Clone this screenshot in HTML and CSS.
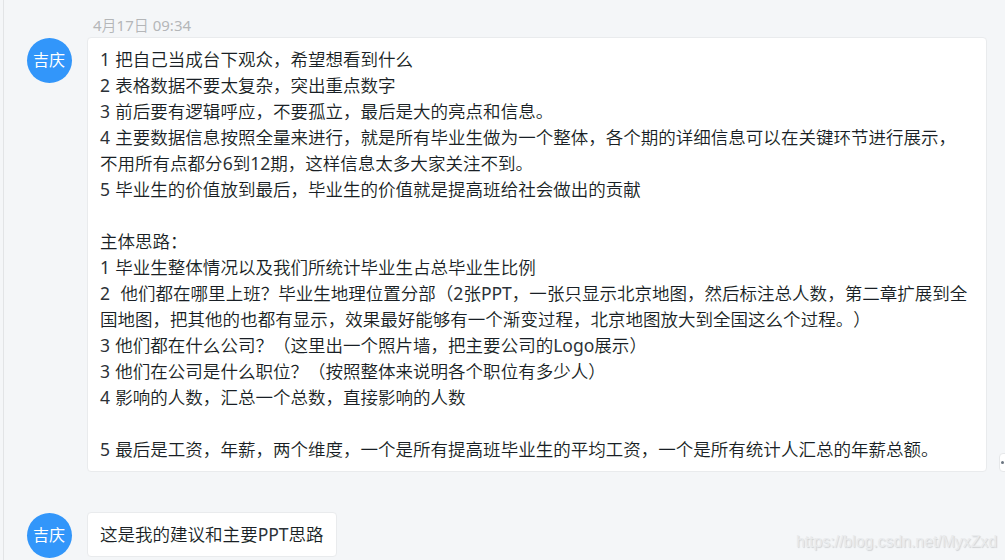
FILE: index.html
```html
<!DOCTYPE html>
<html lang="zh-CN">
<head>
    <meta charset="UTF-8">
    <meta name="viewport" content="width=device-width, initial-scale=1.0">
    <title>聊天记录</title>
    <link rel="stylesheet" href="styles.css">
</head>
<body>
    <div class="chat">
        <div class="time"><span class="en">4</span>月<span class="en">17</span>日<span class="en"> 09:34</span></div>
        <div class="message">
            <div class="avatar">吉庆</div>
            <div class="bubble bubble-long">
                <p><span class="en">1 </span>把自己当成台下观众，希望想看到什么</p>
                <p><span class="en">2 </span>表格数据不要太复杂，突出重点数字</p>
                <p><span class="en">3 </span>前后要有逻辑呼应，不要孤立，最后是大的亮点和信息。</p>
                <p><span class="en">4 </span>主要数据信息按照全量来进行，就是所有毕业生做为一个整体，各个期的详细信息可以在关键环节进行展示，<br>不用所有点都分<span class="en">6</span>到<span class="en">12</span>期，这样信息太多大家关注不到。</p>
                <p><span class="en">5 </span>毕业生的价值放到最后，毕业生的价值就是提高班给社会做出的贡献</p>
                <p><br></p>
                <p>主体思路：</p>
                <p><span class="en">1 </span>毕业生整体情况以及我们所统计毕业生占总毕业生比例</p>
                <p><span class="en">2&nbsp; </span>他们都在哪里上班？毕业生地理位置分部（<span class="en">2</span>张<span class="en">PPT</span>，一张只显示北京地图，然后标注总人数，第二章扩展到全<br>国地图，把其他的也都有显示，效果最好能够有一个渐变过程，北京地图放大到全国这么个过程。）</p>
                <p><span class="en">3 </span>他们都在什么公司？（这里出一个照片墙，把主要公司的<span class="en">Logo</span>展示）</p>
                <p><span class="en">3 </span>他们在公司是什么职位？（按照整体来说明各个职位有多少人）</p>
                <p><span class="en">4 </span>影响的人数，汇总一个总数，直接影响的人数</p>
                <p><br></p>
                <p><span class="en">5 </span>最后是工资，年薪，两个维度，一个是所有提高班毕业生的平均工资，一个是所有统计人汇总的年薪总额。</p>
            </div>
            <div class="more"><span class="dot"></span></div>
        </div>
        <div class="message">
            <div class="avatar">吉庆</div>
            <div class="bubble">
                <p>这是我的建议和主要<span class="en">PPT</span>思路</p>
            </div>
        </div>
    </div>
    <div class="watermark">https://blog.csdn.net/MyxZxd</div>
</body>
</html>
```
FILE: styles.css
```css
* {
    box-sizing: border-box;
}
body {
    margin: 0;
    height: 560px;
    overflow: hidden;
    background: #f4f6f8;
    font-family: "Noto Sans", "Noto Sans CJK SC", sans-serif;
    text-spacing-trim: space-all;
}
.chat {
    height: 560px;
    margin-left: 3px;
    padding: 14px 0 0 23px;
    border-left: 1px solid #e2e4e6;
}
.en {
    font-weight: 400;
}
.time {
    height: 23px;
    padding-left: 66px;
    font-size: 15px;
    line-height: 23px;
    font-weight: 350;
    color: #b4b6b8;
}
.message {
    display: flex;
    align-items: flex-start;
    margin-bottom: 40px;
}
.avatar {
    flex: none;
    width: 45px;
    height: 45px;
    margin: 1px 15px 0 0;
    border-radius: 50%;
    background: #3296fa;
    color: #fff;
    font-size: 16px;
    line-height: 44px;
    text-align: center;
    text-indent: -1px;
}
.bubble {
    flex: none;
    padding: 8px 12px 9px 12px;
    border: 1px solid #e9ebed;
    border-radius: 4px;
    background: #fff;
    color: #191f25;
    font-size: 17.52px;
    line-height: 26px;
    font-weight: 350;
    word-spacing: 0.7px;
    white-space: nowrap;
}
.bubble .en {
    color: #2c3238;
}
.bubble-long {
    width: 900px;
}
.bubble p {
    margin: 0;
}
.more {
    flex: none;
    align-self: flex-end;
    width: 30px;
    height: 19px;
    margin-left: 12px;
    padding: 7px 0 0 1px;
    border: 1px solid #e6e8ea;
    border-radius: 4px;
    background: #fff;
}
.dot {
    display: block;
    width: 3px;
    height: 3px;
    border-radius: 50%;
    background: #6b7580;
}
.watermark {
    position: absolute;
    right: 8px;
    bottom: 8px;
    font-family: "Liberation Sans", sans-serif;
    font-size: 15.8px;
    line-height: 20px;
    color: #e9ebed;
    text-shadow: 1px 1px 1px #d0d2d4;
}
```
